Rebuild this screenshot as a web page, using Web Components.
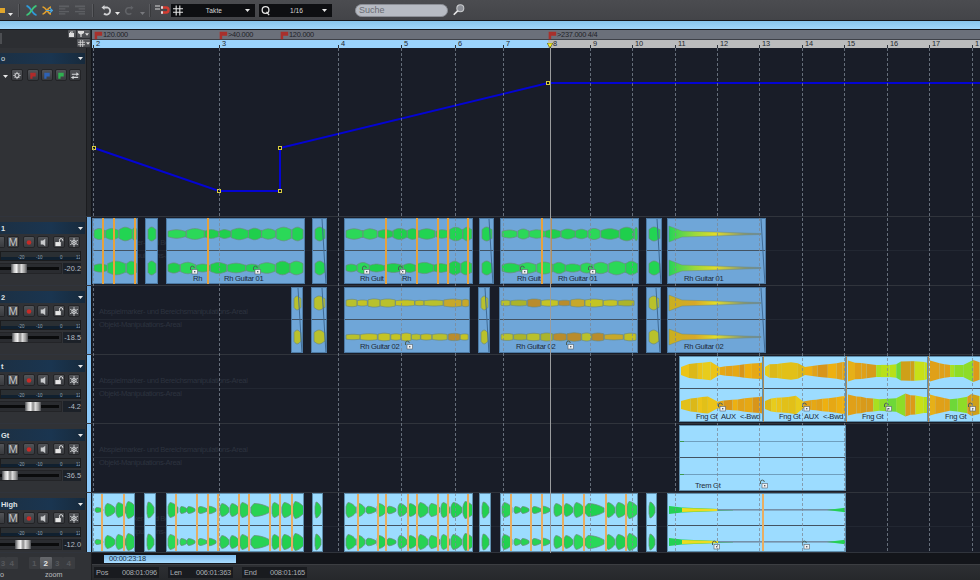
<!DOCTYPE html>
<html><head><meta charset="utf-8"><title>Arranger</title>
<style>
html,body{margin:0;padding:0;width:980px;height:580px;overflow:hidden;background:#191d28;font-family:"Liberation Sans",Arial,sans-serif}
</style></head><body>
<daw-app id="app"></daw-app>
<script>
const LX=92; // page x where the timeline begins
const BARS=[[93,'2'],[219,'3'],[338,'4'],[401,'5'],[455,'6'],[503,'7'],[550,'8'],[590,'9'],[632,'10'],[675,'11'],[717,'12'],[759,'13'],[802,'14'],[844,'15'],[887,'16'],[929,'17'],[972,'1']];
function def(name,css,html,init){
  customElements.define(name,class extends HTMLElement{
    connectedCallback(){
      if(this.shadowRoot)return;
      const r=this.attachShadow({mode:'open'});
      r.innerHTML='<style>'+css+'</style>'+(typeof html==='function'?html(this):html);
      if(init)init(this,r);
    }
  });
}
const arrow=(c='#e8e8e8')=>`<svg width="5" height="3" viewBox="0 0 7 4" preserveAspectRatio="none"><path d="M0 0H7L3.5 4Z" fill="${c}"/></svg>`;
const flag=(c,s=12)=>`<svg width="${s}" height="${s}" viewBox="0 0 12 12"><path d="M2 2H11V7H5V11H2Z" fill="${c}"/></svg>`;

/* ---------- toolbar ---------- */
def('tb-sep',':host{display:block;width:2px;height:13px;background:#5a5b5f;border-right:1px solid #38393c;box-sizing:border-box;flex:none}','');
def('tb-select',`:host{display:flex;align-items:center;height:13px;background:#0e0f12;color:#d6d6d6;font-size:6.6px;letter-spacing:.1px;box-sizing:border-box;flex:none;padding:0 5px 0 2px}
 .l{flex:1;text-align:center}`,t=>`<slot name="icon"></slot><span class="l"><slot></slot></span>${arrow()}`);
def('tb-search',`:host{display:flex;align-items:center;width:93px;height:13px;border-radius:6.5px;background:#b7bbc3;border:1px solid #8c8f96;box-sizing:border-box;color:#6a6d74;font-size:9px;padding-left:3px;flex:none}`,'<slot></slot>');
def('daw-toolbar',`:host{display:flex;align-items:center;height:20px;background:linear-gradient(#4b4c50,#434448);overflow:hidden;flex:none}
 svg{display:block;flex:none}
 .a{display:block;line-height:0;margin-top:7px}`,`
 <svg width="5" height="5" style="margin-right:3px"><rect width="5" height="5" fill="#e0a62c"/></svg>
 <span class="a" style="margin-top:8px">${arrow()}</span>
 <tb-sep style="margin-left:5px"></tb-sep>
 <svg width="11" height="11" viewBox="0 0 11 11" fill="none" stroke-width="1.8" style="margin-left:6px"><path d="M.5 1C4.5 1 6.5 10 10.5 10" stroke="#2f9ad8"/><path d="M.5 10C4.5 10 6.5 1 10.5 1" stroke="#3ec47a"/></svg>
 <svg width="11" height="11" viewBox="0 0 11 11" fill="none" stroke-width="1.6" style="margin-left:5px"><path d="M.5 2C4 2 6 9 9 9" stroke="#e2a02e"/><path d="M.5 9C4 9 6 2 9 2" stroke="#e2a02e"/><path d="M4 5.5H10.5M8 3.3 10.5 5.5 8 7.7" stroke="#4aa6e0" stroke-width="1.2"/></svg>
 <svg width="10" height="10" viewBox="0 0 11 10" style="margin-left:6px" fill="#5d5f63"><rect width="11" height="2"/><rect y="3" width="7" height="1.5"/><rect y="6" width="11" height="1.5"/><rect y="8.5" width="7" height="1.5"/></svg>
 <svg width="10" height="10" viewBox="0 0 11 10" style="margin-left:6px" fill="#5d5f63"><rect width="11" height="2"/><rect y="3" x="4" width="7" height="1.5"/><rect y="6" width="11" height="1.5"/><rect y="8.5" x="4" width="7" height="1.5"/></svg>
 <tb-sep style="margin-left:7px"></tb-sep>
 <svg width="11" height="11" viewBox="0 0 11 11" fill="none" style="margin-left:7px"><path d="M2.5 2.5H6.5A3.6 3.6 0 1 1 3 8.5" stroke="#d2d3d5" stroke-width="1.8"/><path d="M0.5 2.5 3.5 0V5Z" fill="#d2d3d5"/></svg>
 <span class="a" style="margin-left:3px">${arrow()}</span>
 <svg width="10" height="11" viewBox="0 0 11 11" fill="none" style="margin-left:4px"><path d="M8.5 2.5H4.5A3.6 3.6 0 1 0 8 8.5" stroke="#616367" stroke-width="1.8"/><path d="M10.5 2.5 7.5 0V5Z" fill="#616367"/></svg>
 <span class="a" style="margin-left:6px">${arrow('#77787c')}</span>
 <tb-sep style="margin-left:4px"></tb-sep>
 <svg width="15" height="10" viewBox="0 0 15 10" fill="none" style="margin-left:4px"><path d="M0 1H5M0 4H5" stroke="#d8d8d8" stroke-width="1"/><path d="M6 2.5H11A2.5 2.5 0 0 1 11 7.5H6" stroke="#d33b30" stroke-width="2.4"/><path d="M6 2.5H8M6 7.5H8" stroke="#ddd" stroke-width="2.4"/></svg>
 <tb-select style="width:84px;margin-left:1px"><svg slot="icon" width="10" height="11" viewBox="0 0 11 11" fill="none" stroke="#e6e6e6" stroke-width="1.2"><path d="M3.5 0V11M7.5 0V11M0 3.5H11M0 7.5H11"/></svg>Takte</tb-select>
 <tb-select style="width:73px;margin-left:4px"><svg slot="icon" width="10" height="11" viewBox="0 0 11 11" fill="none" stroke="#e6e6e6" stroke-width="1.4"><circle cx="5" cy="5" r="3.7"/><path d="M6 7 9 10.5"/></svg>1/16</tb-select>
 <tb-search style="margin-left:23px">Suche</tb-search>
 <svg width="14" height="14" viewBox="0 0 16 15" fill="none" style="margin-left:4px"><circle cx="9.5" cy="5.5" r="4" fill="#8d9097" stroke="#c8cacd" stroke-width="1.2"/><path d="M6.5 8.5 2 13" stroke="#e8e8e8" stroke-width="1.8"/></svg>`);
def('daw-bluebar',':host{display:block;height:10px;box-sizing:border-box;border-top:1px solid #17181b;border-bottom:1px solid #17181b;background:linear-gradient(#88c5ec,#a0d6fa);flex:none}','');

/* ---------- rulers ---------- */
def('ruler-flag',`:host{position:absolute;top:0;height:9px;display:flex;align-items:center;font-size:7.4px;letter-spacing:-.25px;color:#1f2228;white-space:nowrap}
 svg{margin-left:-1px;flex:none}`,t=>flag('#a8302c',10)+'<slot></slot>');
def('bar-tick',`:host{position:absolute;top:0;height:8px;padding-left:3px;font-size:7.4px;line-height:8px;color:#22262c}
 :host::before{content:"";position:absolute;left:0;bottom:0;width:1px;height:3px;background:#2a2f38}`,'<slot></slot>');
def('mini-btn',`:host{display:flex;align-items:center;justify-content:center;gap:1px;height:8px;background:linear-gradient(#5d5f63,#47494d);border-radius:1px;color:#ddd;font-size:8px;line-height:8px;box-sizing:border-box;flex:none}`,'<slot></slot>');
def('daw-rulers',`:host{display:flex;height:18px;flex:none;background:#2d2f33}
 .side{width:92px;flex:none;box-sizing:border-box;border-right:1px solid #1b1c1f;display:flex;flex-direction:column;align-items:flex-end;gap:1px;padding:0 1px 0 0;background:#2c2e32;position:relative}
 .row{display:flex;gap:1px;align-items:center;height:8px}
 .stub{position:absolute;left:0;top:3px;width:2px;height:11px;background:#4c4e52}
 .main{flex:1;display:flex;flex-direction:column}
 .tempo{height:9px;background:#6b707a;position:relative;border-bottom:1px solid #3e4148;box-sizing:content-box}
 .bars{height:8px;position:relative;background:linear-gradient(90deg,#9bd3fc 0,#9bd3fc 456px,#bbbcbd 456px);overflow:hidden}
 .head{position:absolute;left:455px;top:3px}`,`
 <div class="side"><span class="stub"></span>
  <div class="row"><mini-btn style="width:8px"><svg width="6" height="6" viewBox="0 0 6 6" fill="none" stroke="#ddd"><rect x=".5" y="2.5" width="4" height="3" fill="#ddd"/><path d="M1.5 2.5V1H4"/></svg></mini-btn><mini-btn style="width:13px"><svg width="6" height="6" viewBox="0 0 6 6"><path d="M0 0H6V2L3.6 3.4V6H2.4V3.4L0 2Z" fill="#ddd"/></svg><svg width="4" height="3" viewBox="0 0 7 4"><path d="M0 0H7L3.5 4Z" fill="#ddd"/></svg></mini-btn></div>
  <div class="row"><mini-btn style="width:13px"><svg width="7" height="7" viewBox="0 0 7 7" fill="none" stroke="#ddd" stroke-width=".8"><path d="M2.3 0V7M4.7 0V7M0 2.3H7M0 4.7H7"/></svg><svg width="4" height="3" viewBox="0 0 7 4"><path d="M0 0H7L3.5 4Z" fill="#ddd"/></svg></mini-btn></div>
 </div>
 <div class="main"><div class="tempo" id="t"></div><div class="bars" id="b"></div></div>`,
 (h,r)=>{
  const t=r.getElementById('t');
  [[94,'120.000'],[219,'>40.000'],[280,'120.000'],[548,'>237.000 4/4']].forEach(([x,s])=>{
    const f=document.createElement('ruler-flag');f.style.left=(x-LX)+'px';f.textContent=s;t.append(f);});
  const b=r.getElementById('b');
  BARS.forEach(([x,s])=>{const k=document.createElement('bar-tick');k.style.left=(x-LX)+'px';k.textContent=s;b.append(k);});
  b.insertAdjacentHTML('beforeend','<svg class="head" width="6" height="5" viewBox="0 0 6 5"><path d="M0 0H6L3 5Z" fill="#f4ee20" stroke="#222" stroke-width=".5"/></svg>');
 });

/* ---------- track header ---------- */
const ICONS={
 rec:'<circle cx="5.5" cy="5.5" r="2.5" fill="#c82a26"/>',
 spk:'<path d="M3 3.2H5.5L8 1.5V9.5L5.5 7.8H3Z" fill="#c8cacc"/>',
 lock:'<rect x="1.5" y="5" width="6" height="4.5" fill="#e6e6e6"/><path d="M6 5V3A1.8 1.8 0 0 1 9.6 3V4" fill="none" stroke="#e6e6e6"/>',
 snow:'<g stroke="#c8cacc" stroke-width="1" fill="none"><path d="M5.5 .5V10.5M1.2 3 9.8 8M1.2 8 9.8 3"/><circle cx="5.5" cy="5.5" r="2.4"/></g>',
 gear:'<g stroke="#cfd1d3" fill="none"><circle cx="5.5" cy="5.5" r="2.2" stroke-width="1.2"/><path d="M5.5 1.5V3M5.5 8V9.5M1.5 5.5H3M8 5.5H9.5M2.7 2.7 3.7 3.7M7.3 7.3 8.3 8.3M2.7 8.3 3.7 7.3M7.3 3.7 8.3 2.7"/></g>',
 red:'<path d="M2.5 2.5H8.5V6.5H5V9H2.5Z" fill="#b02a2a"/>',
 blue:'<path d="M2.5 2.5H8.5V6.5H5V9H2.5Z" fill="#2e62b4"/>',
 green:'<path d="M2.5 2.5H8.5V6.5H5V9H2.5Z" fill="#2fb050"/>',
 swap:'<path d="M2 3.5H7V2L10 4 7 6V4.8H2ZM9 7H4V5.8L1 7.8 4 9.6V8.2H9Z" fill="#d6d8da"/>'
};
def('hdr-btn',`:host{display:flex;align-items:center;justify-content:center;width:12px;height:12px;flex:none;box-sizing:border-box;border-radius:2px;background:linear-gradient(#525458,#393b3f);border:1px solid #232427;color:#c4c6c8;font-size:11px;overflow:hidden}`,
 t=>t.getAttribute('icon')?`<svg width="11" height="11" viewBox="0 0 11 11">${ICONS[t.getAttribute('icon')]}</svg>`:'<slot></slot>');
def('hdr-title',`:host{display:flex;align-items:center;justify-content:space-between;height:12px;width:85px;box-sizing:border-box;padding:0 2px 0 1px;background:linear-gradient(90deg,#1c3044,#1a3550 60%,#172a3c);color:#dfe3e8;font-size:7.4px;font-weight:bold;flex:none}`,`<span><slot></slot></span>${arrow()}`);
def('hdr-meter',`:host{display:block;position:relative;height:10px;width:81px;background:linear-gradient(#2a2f33 0 5px,#10202f 5px);box-sizing:border-box;border:1px solid #1b1c1e;color:#8fa4b4;font-size:4.5px;flex:none;overflow:hidden}
 i{position:absolute;top:3px;font-style:normal;line-height:6px}`,`<i style="left:17px">-20</i><i style="left:35px">-10</i><i style="left:59px">0</i><i style="left:75px">12</i>`);
def('hdr-fader',`:host{display:flex;align-items:center;height:11px;width:81px;flex:none}
 .tr{position:relative;width:62px;height:11px;background:#2a2c30;display:flex;align-items:center;border:1px solid #232427;border-left:0;box-sizing:border-box}
 .tr::before{content:"";position:absolute;left:0;right:2px;top:3px;height:3px;background:#0a0b0c}
 .h{position:absolute;top:0;width:16px;height:9px;background:linear-gradient(90deg,#4a4c50,#c8c8c8 20%,#f2f2f2 35%,#8a8a8a 50%,#dcdcdc 65%,#9a9a9a 85%,#4c4e52)}
 .v{flex:1;height:11px;margin-left:1px;background:#1c2128;color:#b4bcc4;font-size:7.4px;line-height:11px;text-align:right}`,
 t=>`<div class="tr"><div class="h" style="left:${t.getAttribute('pos')}px"></div></div><div class="v">${t.getAttribute('val')}</div>`);
def('daw-header',`:host{display:flex;flex-direction:column;width:87px;flex:none;box-sizing:border-box;padding-top:5px;background:#303236;border-right:1px solid #1b1c1f;overflow:hidden}
 .btns{display:flex;margin-top:2px;height:12px}
 hdr-meter{margin-top:3px}hdr-fader{margin-top:2px}`,
 t=>{
  if(t.hasAttribute('tempo')) return `<hdr-title style="margin-top:0;height:11px;font-weight:normal">o</hdr-title>
   <div class="btns" style="margin-top:5px"><span style="width:11px;padding:4px 0 0 3px;box-sizing:border-box;line-height:0">${arrow()}</span>
   <hdr-btn icon="gear"></hdr-btn><hdr-btn icon="red" style="margin-left:4px"></hdr-btn><hdr-btn icon="blue" style="margin-left:2px"></hdr-btn><hdr-btn icon="green" style="margin-left:2px"></hdr-btn><hdr-btn icon="swap" style="margin-left:2px"></hdr-btn></div>`;
  return `<hdr-title>${t.getAttribute('name')}</hdr-title>
  <div class="btns"><hdr-btn style="width:5px;border-left:0;border-radius:0 2px 2px 0"></hdr-btn><hdr-btn style="margin-left:2px">M</hdr-btn><hdr-btn icon="rec" style="margin-left:4px"></hdr-btn><hdr-btn icon="spk" style="margin-left:2px"></hdr-btn><hdr-btn icon="lock" style="margin-left:4px"></hdr-btn><hdr-btn icon="snow" style="margin-left:3px"></hdr-btn></div>
  <hdr-meter></hdr-meter><hdr-fader pos="${t.getAttribute('pos')}" val="${t.getAttribute('val')}"></hdr-fader>`;
 });

/* ---------- timeline objects ---------- */
let seedv=7;
function rnd(){seedv=(seedv*16807)%2147483647;return seedv/2147483647;}
function blobPoly(x0,len,amp,cy,mode){
 const top=[],bot=[];
 for(let i=0;i<=len;i+=1){
  const t=i/len;let a;
  if(mode==='decay') a=amp*(t<.15?.45+.55*t/.15:1-.68*Math.pow((t-.15)/.85,2));
  else if(mode==='cont') a=amp*(.76+.24*Math.sin(Math.PI*t));
  else a=amp*(.64+.36*Math.sin(Math.PI*Math.min(1,t*1.08)));
  top.push((x0+i).toFixed(1)+','+(cy-a).toFixed(1));
  bot.unshift((x0+i).toFixed(1)+','+(cy+a).toFixed(1));
 }
 return top.concat(bot).join(' ');
}
const PAL={
 green:['#22d452','#2bd858','#1fcf4c'],
 olive:['#b9c12c','#c5c424','#abb42a','#c2c024','#c7a82a','#b9c12c','#b98c2c','#a9bf30'],
 t5:['#22d050','#2ad858','#28d254']
};
const T5B={
 43:[[1,8,2.5],[11,10,6.5],[22,10,7.5],[32,10,8.5]],
 138:[[0,10,7.5],[12,7,3.5],[19,8,3.5],[30,9,3.5],[39,9,3.8],[52,9,6.5],[62,9,6.5],[72,10,7.5],[83,19,6.5],[104,9,7.5],[114,11,7.5],[125,11,8.5]],
 129:[[0,10,7.5],[11,8,6.5],[20,10,3.8],[31,9,6.5],[41,9,3.8],[52,9,6.5],[62,9,6.5],[72,10,7.5],[83,11,6.5],[95,9,7.5],[105,11,7.5],[117,11,8.5]]
};
const lerpEnv=(e,t)=>{for(let i=1;i<e.length;i++){if(t<=e[i][0]){const[a,b]=e[i-1],[c,d]=e[i];return b+(d-b)*(t-a)/(c-a);}}return e[e.length-1][1];};
const ENV_ORANGE=[[0,.45],[.04,.68],[.28,.92],[.4,1],[.45,.36],[.52,.5],[.75,.72],[1,1]];
const ENV_MIXED=[[0,1.1],[.06,.95],[.35,.62],[.6,.68],[.72,1.25],[.8,1],[1,.85]];
function stepped(w,cy,env,amp,col){
 let s='',x=1,prev=amp*lerpEnv(env,0);
 while(x<w-1){
  const l=Math.min(4+rnd()*6,w-1-x),nx=x+l;
  const a=amp*lerpEnv(env,nx/w)*(.94+rnd()*.12);
  s+=`<polygon points="${x.toFixed(1)},${(cy-prev).toFixed(1)} ${nx.toFixed(1)},${(cy-a).toFixed(1)} ${nx.toFixed(1)},${(cy+a).toFixed(1)} ${x.toFixed(1)},${(cy+prev).toFixed(1)}" fill="${col(x/w)}"/>`;
  prev=a;x=nx;
 }
 return s;
}
def('daw-wave',`:host{position:absolute;left:0;top:0}svg{display:block;overflow:visible}`,
 t=>{
  const w=+t.getAttribute('w'),k=t.getAttribute('kind'),cy=+t.getAttribute('cy');
  seedv=+t.getAttribute('seed')||11;rnd();rnd();let s='';
  const poly=(pts,c)=>`<polygon points="${pts}" fill="${c}" stroke="#6d8a80" stroke-width=".7"/>`;
  const pick=a=>a[Math.floor(rnd()*a.length)];
  if(k==='wedge'||k==='wedgeY'){
    const m=8,e=w-6,st=k==='wedge'?'#26d458':'#c8b020',st2=k==='wedge'?'#9bd83a':'#d8a828';
    const id='g'+k;
    s+=`<defs><linearGradient id="${id}"><stop offset="0" stop-color="${st}"/><stop offset=".28" stop-color="${st2}"/><stop offset=".5" stop-color="#e2dc28"/><stop offset=".8" stop-color="#8a9a70"/><stop offset="1" stop-color="#6a7f90"/></linearGradient></defs>`;
    s+=`<polygon points="1,${cy-m} 14,${cy-3} ${e},${cy-.5} ${e},${cy+.5} 14,${cy+3} 1,${cy+m}" fill="url(#${id})" stroke="#6d8a80" stroke-width=".5"/>`;
  } else if(k==='t5end'){
    s+=`<polygon points="1,${cy-4} 14,${cy-2.5} 50,${cy-1} 65,${cy-.5} 65,${cy+.5} 50,${cy+1} 14,${cy+2.5} 1,${cy+4}" fill="#25d054"/><polygon points="14,${cy-2} 50,${cy-1} 50,${cy+1} 14,${cy+2}" fill="#ecdc20"/>
    <rect x="50" y="${cy-1}" width="125" height="1.6" fill="#7590a8"/><polygon points="${w-20},${cy} ${w-1},${cy-2.5} ${w-1},${cy+2.5}" fill="#25d054"/>`;
  } else if(k==='orange'){
    s+=stepped(w,cy,ENV_ORANGE,9,x=>x<.42?pick(['#e8cc1c','#e2c018','#ecc418','#dcb818']):pick(['#d8951a','#e2a218','#eeb010','#e6a814']));
  } else if(k==='mixed'){
    s+=stepped(w,cy,ENV_MIXED,9.5,x=>x<.3?pick(['#e0a018','#d89a1a','#e6b018']):x<.62?pick(['#8edc28','#a8e020','#6ed838','#b8e018']):x<.82?pick(['#dc9a18','#e2a818','#cfa018']):pick(['#b8e018','#c8e018']));
  } else if(k==='t5'&&T5B[w]){
    T5B[w].forEach(([x,l,a])=>{s+=poly(blobPoly(x+1,l,a,cy,'decay'),pick(PAL.t5));});
  } else {
    const spec={green:[11,19,3.8,6,'round'],olive:[9,20,2.6,4.2,'cont']}[k];
    const end=w-2;
    if(w<20){s+=poly(blobPoly(2,w-5,k==='t5'?8:7,cy,k==='t5'?'decay':'round'),k==='t5'?PAL.t5[0]:PAL[k][0]);}
    else{let x=1;while(x<end-3){
      const l=Math.min(spec[0]+rnd()*(spec[1]-spec[0]),end-x);
      let a=spec[2]+rnd()*(spec[3]-spec[2]);
      if(k==='green'&&end-x<30)a=6.8;
      s+=poly(blobPoly(x,l,a,cy,spec[4]),pick(PAL[k]));
      x+=l;
    }
    s+=`<rect x="${end}" y="${cy-.4}" width="2" height=".8" fill="#6d8a80"/>`;}
  }
  return `<svg width="${w}" height="70">${s}</svg>`;
 });
def('daw-clip',`:host{position:absolute;top:1px;box-sizing:border-box;border:1px solid;overflow:hidden;color:#1e2a38}
 .mid{position:absolute;left:0;right:0;height:1px;background:#435362}`,
 t=>`<div class="mid" style="top:${t.getAttribute('mid')||32}px"></div><slot></slot>`);
def('clip-label',`:host{position:absolute;font-size:7.6px;letter-spacing:-.3px;line-height:10px;white-space:nowrap;color:#1e2a38}`,'<slot></slot>');
def('clip-lock',`:host{position:absolute;width:8px;height:10px;display:block}svg{display:block}`,
 `<svg width="8" height="10" viewBox="0 0 8 10"><path d="M.5 5V3A1.9 1.9 0 0 1 4.3 3" fill="none" stroke="#4c6058" stroke-width="1"/><rect x="2" y="4.5" width="5.5" height="4.5" fill="#eef1f3" stroke="#55606a" stroke-width=".6"/><rect x="4" y="6" width="1.4" height="1.4" fill="#55606a"/></svg>`);
def('lane-mark',`:host{position:absolute;top:1px;bottom:1px;width:1.5px;background:var(--mark,#e8a23c)}`,'');
def('lane-hint',`:host{position:absolute;left:7px;font-size:7.6px;letter-spacing:-.35px;line-height:11px;color:#2d333f;white-space:nowrap}`,'<slot></slot>');

def('daw-track',`:host{display:flex;flex:none;box-sizing:border-box;border-bottom:1px solid #30343c}
 .strip{width:5px;flex:none;background:var(--strip,#6ea7dc);border-right:1px solid #14161b;box-sizing:border-box}
 .lane{position:relative;flex:1;overflow:hidden;background:#191d28}
 .rule{position:absolute;left:0;right:0;height:1px;background:#222732}`,
 t=>`<slot name="head"></slot><div class="strip"></div><div class="lane">${t.hasAttribute('tempo')?'':`<div class="rule" style="top:${t.getAttribute('mid')||33}px"></div>`}<slot></slot></div>`);

def('daw-overlay',`:host{position:absolute;left:${LX}px;top:48px;right:0;height:505px;pointer-events:none;overflow:hidden}
 .g{position:absolute;top:0;bottom:0;width:1px;background:repeating-linear-gradient(#7d8794 0 3px,transparent 3px 5px);opacity:.75}
 .p{position:absolute;left:458px;top:0;bottom:0;width:1px;background:#9a9c9e}`,
 ()=>BARS.map(([x])=>`<div class="g" style="left:${x-LX}px"></div>`).join('')+'<div class="p"></div>');
def('daw-tempo-curve',`:host{position:absolute;inset:0;display:block}svg{display:block}`,
 ()=>{const p=[[94,148],[219,191],[280,191],[280,148],[548,83]].map(([x,y])=>[x-LX,y-48]);
  return `<svg width="888" height="168"><polyline points="${p.map(a=>a.join(',')).join(' ')} 888,35" fill="none" stroke="#0404d2" stroke-width="2"/>${p.map(([x,y])=>`<rect x="${x-1.5}" y="${y-1.5}" width="3" height="3" fill="#11131a" stroke="#d8cc40"/>`).join('')}</svg>`;});

/* ---------- footer ---------- */
def('zoom-key',`:host{display:flex;align-items:center;justify-content:center;width:11.5px;height:12px;background:#3a3c40;color:#56585c;font-size:8px;font-weight:bold;border-radius:1px;flex:none}
 :host([on]){background:linear-gradient(#66686c,#505256);color:#e6e6e6}`,'<slot></slot>');
def('status-box',`:host{display:flex;justify-content:space-between;align-items:center;width:65px;height:11px;background:#191b1f;color:#a9adb2;font-size:7.4px;letter-spacing:-.2px;padding:0 2px;box-sizing:border-box;flex:none}`,'<slot></slot>');
def('daw-footer',`:host{display:flex;height:27px;flex:none;background:#2b2d31;position:relative}
 .left{width:92px;flex:none;box-sizing:border-box;border-right:1px solid #1c1d20;background:#303236;padding-top:4px;color:#b9bbbe;font-size:7.2px;position:relative}
 .keys{display:flex;gap:0;align-items:center}
 .cap{display:flex;margin-top:1px;line-height:10px}
 .right{flex:1;display:flex;flex-direction:column}
 .scroll{height:12px;background:#13151a;display:flex;align-items:center;padding-left:12px;border-bottom:1px solid #3c3e42;box-sizing:border-box}
 .thumb{width:132px;height:8px;background:linear-gradient(#7fbcec,#a9dcff);color:#20303e;font-size:7.4px;letter-spacing:-.2px;line-height:8px;padding-left:5px;box-sizing:border-box}
 .st{flex:1;display:flex;gap:9px;align-items:center;padding-left:2px;background:linear-gradient(#2d2f33,#26282b)}`,
 `<div class="left"><div class="keys"><zoom-key style="width:6px">3</zoom-key><zoom-key style="margin-right:11px">4</zoom-key><zoom-key>1</zoom-key><zoom-key on>2</zoom-key><zoom-key>3</zoom-key><zoom-key>4</zoom-key></div>
 <div class="cap"><span style="width:45px">o</span><span>zoom</span></div></div>
 <div class="right"><div class="scroll"><div class="thumb">00:00:23:18</div></div>
 <div class="st"><status-box><span>Pos</span><span>008:01:096</span></status-box><status-box><span>Len</span><span>006:01:363</span></status-box><status-box><span>End</span><span>008:01:165</span></status-box></div></div>`);

def('daw-app',`:host{display:flex;flex-direction:column;width:980px;height:580px;position:relative;overflow:hidden;background:#191d28}
 .tracks{display:flex;flex-direction:column;flex:none;height:505px}`,
 `<daw-toolbar></daw-toolbar><daw-bluebar></daw-bluebar><daw-rulers></daw-rulers>
  <div class="tracks"><slot></slot></div><daw-overlay></daw-overlay><daw-footer></daw-footer>`);

/* ---------- data ---------- */
const BLUE={bg:'#6fa6d8',bd:'#4d7aa4'},SKY={bg:'#9cdcff',bd:'#5f8fae'};
const H1='Abspielmarker- und Bereichsmanipulations-Areal',H2='Objekt-Manipulations-Areal';
const T=[
 {name:'1',pos:11,val:'-20.2',h:69,strip:'#6ea7dc',cy:[16,50],
  clips:[[92,46,'green'],[145,13,'green'],[166,139,'green'],[312,15,'green',0,1],[344,129,'green'],[479,15,'green',0,1],[500,139,'green'],[646,16,'green',0,1],[667,99,'wedge',0,1]],
  marks:[102,113,134,207,385,416,437,447,467,541,551],
  labels:[[193,'Rh'],[224,'Rh Guitar 01'],[360,'Rh Guit'],[402,'Rh'],[517,'Rh Guit'],[558,'Rh Guitar 01'],[684,'Rh Guitar 01']],
  locks:[190,253,362,398,520,588],ly:55,lky:46,thin:[551]},
 {name:'2',pos:12,val:'-18.5',h:69,strip:'#6ea7dc',cy:[16,50],
  clips:[[291,12,'olive',0,1],[311,16,'olive',0,1],[344,126,'olive'],[478,12,'olive',0,1],[499,139,'olive'],[646,15,'olive',0,1],[667,99,'wedgeY',0,1]],
  marks:[550],thin:[550],
  labels:[[360,'Rh Guitar 02'],[516,'Rh Guitar 02'],[684,'Rh Guitar 02']],
  locks:[405,566],ly:54,lky:52},
 {name:'t',pos:25,val:'-4.2',h:69,strip:'#8cc9fa',cy:[15,49],
  clips:[[679,84,'orange'],[763,83,'orange'],[846,82,'mixed'],[928,60,'mixed']],marks:[763,846,928],thin:[763,846,928],
  labels:[[696,'Fng Gt'],[721,'AUX'],[740,'<-Bwd'],[779,'Fng Gt'],[804,'AUX'],[823,'<-Bwd'],[862,'Fng Gt'],[945,'Fng Gt']],
  locks:[718,802,884,968],ly:55,lky:45},
 {name:'Gt',pos:2,val:'-36.5',h:69,strip:'#8cc9fa',cy:[],trem:true,
  clips:[[679,167,'none']],marks:[],labels:[[695,'Trem Gt']],locks:[760],ly:55,lky:53},
 {name:'High',pos:15,val:'-12.0',h:60,strip:'#8cc9fa',cy:[17,49],mid:33,top:0,mark:'#e8ae62',
  clips:[[92,43,'t5'],[144,12,'t5'],[166,138,'t5'],[312,11,'t5'],[344,129,'t5'],[479,12,'t5'],[500,138,'t5'],[646,11,'t5'],[667,179,'t5end']],
  marks:[101,123,175,196,207,217,238,248,269,279,291,357,377,385,407,416,437,447,467,510,530,541,562,583,605,625,762],
  labels:[],locks:[712,802],ly:48,lky:46}
];
const mk=(tag,attrs={},txt)=>{const e=document.createElement(tag);for(const k in attrs)e.setAttribute(k,attrs[k]);if(txt!=null)e.textContent=txt;return e;};
const app=document.getElementById('app');

const tt=mk('daw-track',{tempo:''});tt.style.height='169px';tt.style.setProperty('--strip','#26282c');
tt.append(mk('daw-header',{tempo:'',slot:'head'}),mk('daw-tempo-curve'));
app.append(tt);

T.forEach((d,ti)=>{
 const tr=mk('daw-track',{mid:d.mid||33});tr.style.height=d.h+'px';tr.style.setProperty('--strip',d.strip);
 if(d.mark)tr.style.setProperty('--mark',d.mark);
 tr.append(mk('daw-header',{name:d.name,pos:d.pos,val:d.val,slot:'head'}));
 const a=mk('lane-hint',{},H1);a.style.top='20px';const b=mk('lane-hint',{},H2);b.style.top='33px';tr.append(a,b);
 const skin=ti<2?BLUE:SKY, hgt=d.top===0?d.h-1:d.h-3;
 d.clips.forEach((c,ci)=>{
  const el=mk('daw-clip',{mid:(d.mid||33)-2});
  el.style.cssText=`left:${c[0]-LX}px;width:${c[1]}px;height:${hgt}px;background:${skin.bg};border-color:${skin.bd}`+(d.top===0?';top:0':'');
  d.cy.forEach((cy,i)=>{ if(c[2]!=='none') el.append(mk('daw-wave',{w:c[1],kind:c[2],cy:cy-1,seed:(ti+1)*97+ci*31+i*3+5}));});
  if(d.trem){
   [15,48].forEach(y=>{const l=mk('div');l.style.cssText=`position:absolute;left:0;right:0;top:${y}px;height:1px;background:#6f9fbe`;el.append(l);
     const g=mk('div');g.style.cssText=`position:absolute;left:0;width:4px;top:${y}px;height:1px;background:#3f9a4c`;el.append(g);});
  }
  if(c[4]){const f=document.createElementNS('http://www.w3.org/2000/svg','svg');f.setAttribute('width',c[1]);f.setAttribute('height',hgt);f.style.cssText='position:absolute;left:0;top:0';f.innerHTML=`<path d="M${c[1]-6} 0L${c[1]-2} ${hgt}" stroke="#3f6a94" fill="none"/>`;el.append(f);}
  (d.labels||[]).forEach(([x,s])=>{ if(x>=c[0]&&x<c[0]+c[1]){const l=mk('clip-label',{},s);l.style.cssText=`left:${x-c[0]-1}px;top:${d.ly}px`;el.append(l);} });
  (d.locks||[]).forEach(x=>{ if(x>=c[0]&&x<c[0]+c[1]){const l=mk('clip-lock');l.style.cssText=`left:${x-c[0]-1}px;top:${d.lky}px`;el.append(l);} });
  tr.append(el);
 });
 d.marks.forEach(x=>{const m=mk('lane-mark');m.style.left=(x-LX)+'px';if((d.thin||[]).includes(x))m.style.cssText+=';width:1px;opacity:.75;background:#c88a3a';tr.append(m);});
 app.append(tr);
});
</script>
</body></html>
